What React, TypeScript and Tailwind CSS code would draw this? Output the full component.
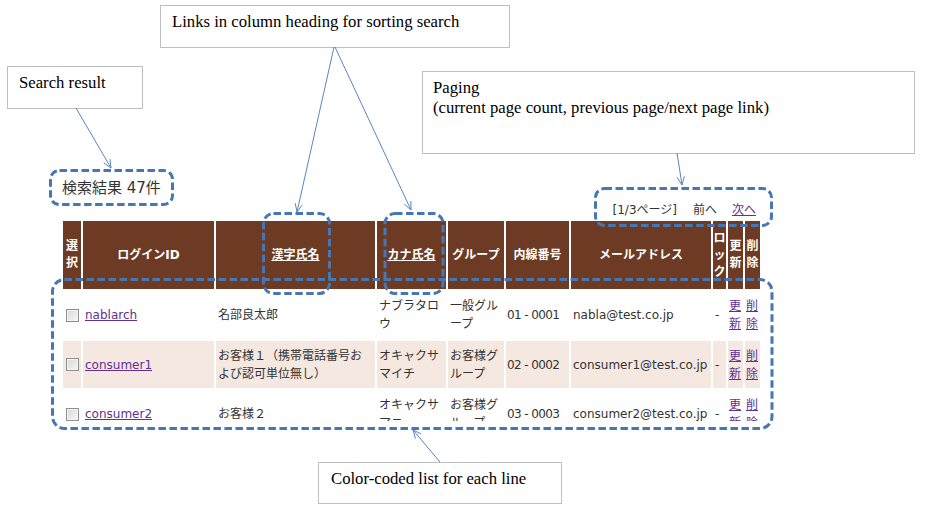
import React from "react";

const jp = { fontFamily: '"DejaVu Sans", "Noto Sans CJK JP", sans-serif' };
const serif = { fontFamily: '"Liberation Serif", "Times New Roman", serif' };

type Arrow = { x1: number; y1: number; x2: number; y2: number };
const arrows: Arrow[] = [
  { x1: 76, y1: 108, x2: 111, y2: 168 },
  { x1: 334, y1: 47, x2: 297, y2: 212 },
  { x1: 335, y1: 47, x2: 411, y2: 210 },
  { x1: 677, y1: 153, x2: 682, y2: 185 },
  { x1: 440, y1: 462, x2: 413, y2: 430 },
];

const dashed = [
  { x: 50.5, y: 170.5, w: 122, h: 34, rx: 9 },
  { x: 263.5, y: 213.5, w: 66, h: 80, rx: 10 },
  { x: 385, y: 213.5, w: 58, h: 80, rx: 10 },
  { x: 595.5, y: 188.5, w: 176, h: 37, rx: 9 },
  { x: 52.5, y: 279.5, w: 719.5, h: 149, rx: 12 },
];

function head(a: Arrow) {
  const ang = Math.atan2(a.y2 - a.y1, a.x2 - a.x1);
  const L = 9;
  const s = 0.42;
  return `M${a.x2 - L * Math.cos(ang - s)} ${a.y2 - L * Math.sin(ang - s)} L${a.x2} ${a.y2} L${a.x2 - L * Math.cos(ang + s)} ${a.y2 - L * Math.sin(ang + s)}`;
}

function Checkbox() {
  return (
    <div className="w-[13px] h-[13px] border border-[#8e8f8f] bg-gradient-to-br from-[#d8d8d8] to-[#f7f7f7] shadow-[inset_0_0_0_1px_#f4f4f4]" />
  );
}

const Link = ({ children }: { children: React.ReactNode }) => (
  <span className="text-[#5e3192] underline">{children}</span>
);

const H = ({ children, className = "" }: { children: React.ReactNode; className?: string }) => (
  <div
    className={`bg-[#6d3b24] text-white font-bold text-[12px] leading-[17px] h-[68px] flex items-center justify-center text-center ${className}`}
  >
    {children}
  </div>
);

const C = ({ children, bg, className = "" }: { children?: React.ReactNode; bg: string; className?: string }) => (
  <div className={`${bg} flex items-center px-[2px] text-[12px] leading-[18px] text-[#333] ${className}`}>{children}</div>
);

type Row = {
  id: string;
  kanji: React.ReactNode;
  kana: React.ReactNode;
  group: React.ReactNode;
  tel: string;
  mail: string;
  bg: string;
  h: string;
};

const rows: Row[] = [
  {
    id: "nablarch",
    kanji: "名部良太郎",
    kana: (
      <>
        ナブラタロ
        <br />ウ
      </>
    ),
    group: (
      <>
        一般グル
        <br />
        ープ
      </>
    ),
    tel: "01 - 0001",
    mail: "nabla@test.co.jp",
    bg: "bg-white",
    h: "h-[48px]",
  },
  {
    id: "consumer1",
    kanji: (
      <>
        お客様１（携帯電話番号お
        <br />
        よび認可単位無し）
      </>
    ),
    kana: (
      <>
        オキャクサ
        <br />
        マイチ
      </>
    ),
    group: (
      <>
        お客様グ
        <br />
        ループ
      </>
    ),
    tel: "02 - 0002",
    mail: "consumer1@test.co.jp",
    bg: "bg-[#f5e8e1]",
    h: "h-[47px]",
  },
  {
    id: "consumer2",
    kanji: "お客様２",
    kana: (
      <>
        オキャクサ
        <br />
        マニ
      </>
    ),
    group: (
      <>
        お客様グ
        <br />
        ループ
      </>
    ),
    tel: "03 - 0003",
    mail: "consumer2@test.co.jp",
    bg: "bg-white",
    h: "h-[48px]",
  },
];

export default function App() {
  return (
    <div className="relative w-[940px] h-[509px] overflow-hidden bg-white" style={jp}>
      {/* page */}
      <div className="pt-[178px] pl-[63px]">
        <div className="w-[697px]">
          <div className="h-[20px] leading-[20px] text-[15px] text-[#333] -ml-[1px]">検索結果 47件</div>
          <div className="mt-[3px] h-[18px] leading-[18px] text-[12px] text-[#333] flex justify-end pr-[4px]">
            <span>[1/3ページ]</span>
            <span className="ml-[16px]">前へ</span>
            <span className="ml-[15px]">
              <Link>次へ</Link>
            </span>
          </div>
          <div className="mt-[2px] h-[200px] overflow-hidden">
            <div className="grid grid-cols-[18px_131px_159px_69px_56px_63px_140px_13px_15px_15px] gap-[2px]">
              <H className="break-all">選択</H>
              <H>ログインID</H>
              <H>
                <span className="underline">漢字氏名</span>
              </H>
              <H>
                <span className="underline">カナ氏名</span>
              </H>
              <H>グループ</H>
              <H>内線番号</H>
              <H>メールアドレス</H>
              <H className="break-all">ロック</H>
              <H className="break-all">更新</H>
              <H className="break-all">削除</H>
              {rows.map((r) => (
                <React.Fragment key={r.id}>
                  <C bg={r.bg} className={`${r.h} justify-center px-0`}>
                    <Checkbox />
                  </C>
                  <C bg={r.bg}>
                    <Link>{r.id}</Link>
                  </C>
                  <C bg={r.bg}>
                    <div>{r.kanji}</div>
                  </C>
                  <C bg={r.bg}>
                    <div>{r.kana}</div>
                  </C>
                  <C bg={r.bg}>
                    <div>{r.group}</div>
                  </C>
                  <C bg={r.bg} className="whitespace-nowrap tracking-[-0.6px] pl-[1px]">
                    {r.tel}
                  </C>
                  <C bg={r.bg} className="whitespace-nowrap">
                    {r.mail}
                  </C>
                  <C bg={r.bg}>-</C>
                  <C bg={r.bg} className="px-0 pl-[1px]">
                    <Link>
                      更<br />新
                    </Link>
                  </C>
                  <C bg={r.bg} className="px-0 pl-[1px]">
                    <Link>
                      削<br />除
                    </Link>
                  </C>
                </React.Fragment>
              ))}
            </div>
          </div>
        </div>
      </div>

      {/* annotation callouts */}
      <div
        className="absolute left-[160px] top-[5px] w-[350px] h-[43px] border border-[#bfbfbf] bg-white pl-[11px] pt-[6px] text-[16.7px] leading-[19px] text-black"
        style={serif}
      >
        Links in column heading for sorting search
      </div>
      <div
        className="absolute left-[7px] top-[66px] w-[136px] h-[43px] border border-[#bfbfbf] bg-white pl-[11px] pt-[6px] text-[16.7px] leading-[19px] text-black"
        style={serif}
      >
        Search result
      </div>
      <div
        className="absolute left-[422px] top-[71px] w-[493px] h-[83px] border border-[#bfbfbf] bg-white pl-[10px] pt-[6px] text-[16.7px] leading-[20px] text-black"
        style={serif}
      >
        <div>Paging</div>
        <div>(current page count, previous page/next page link)</div>
      </div>
      <div
        className="absolute left-[318px] top-[462px] w-[244px] h-[42px] border border-[#bfbfbf] bg-white pl-[12px] pt-[6px] text-[16.7px] leading-[19px] text-black"
        style={serif}
      >
        Color-coded list for each line
      </div>

      {/* arrows and highlight boxes */}
      <svg className="absolute inset-0 pointer-events-none" width={940} height={509}>
        {dashed.map((d, i) => (
          <rect
            key={i}
            x={d.x}
            y={d.y}
            width={d.w}
            height={d.h}
            rx={d.rx}
            fill="none"
            stroke="#4677b3"
            strokeWidth={3}
            strokeDasharray="7.5 3.5"
          />
        ))}
        {arrows.map((a, i) => (
          <g key={i} stroke="#5a86c2" strokeWidth={1} fill="none">
            <line x1={a.x1} y1={a.y1} x2={a.x2} y2={a.y2} />
            <path d={head(a)} />
          </g>
        ))}
      </svg>
    </div>
  );
}
